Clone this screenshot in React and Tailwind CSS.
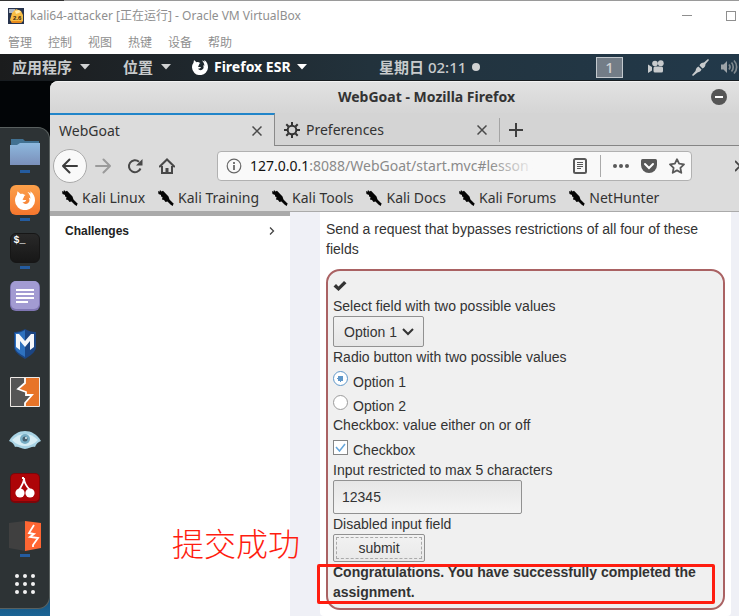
import React from "react";

const hostMenus = ["管理", "控制", "视图", "热键", "设备", "帮助"];
const bookmarks = ["Kali Linux", "Kali Training", "Kali Tools", "Kali Docs", "Kali Forums", "NetHunter"];

function VirtualBoxIcon() {
  return (
    <svg width="16" height="16" viewBox="0 0 16 16" className="shrink-0">
      <rect width="16" height="16" fill="#27334d" />
      <path d="M1 1h6v4H1z" fill="#aab4c4" />
      <path d="M4 5l4-4 5 2 2 4v6l-2 2H4l-2-3z" fill="#f8bd45" />
      <path d="M7 3l4-1 2 2-5 2z" fill="#ffe9a8" />
      <path d="M3 13h11l-1 2H4z" fill="#e88a1c" />
      <text x="5" y="12" fontSize="6" fontWeight="700" fill="#352411" fontFamily="Liberation Sans, sans-serif">2.6</text>
    </svg>
  );
}

function Caret({ color }) {
  return (
    <svg width="10" height="6" viewBox="0 0 10 6" className="shrink-0">
      <path d="M0 0h10L5 5.500z" fill={color} />
    </svg>
  );
}

function FirefoxMark({ size, color, hole }) {
  return (
    <svg width={size} height={size} viewBox="0 0 16 16" className="shrink-0">
      <path d="M2 1l2.500 2.200C6 2.800 7 2.800 7 3.500L8.500 4 7 6l-1 1.500c1 .8 2 .3 3 .5-.5 1.500-2 2-3 1.600 1 1.700 3 1.900 4.300 1C12 9.500 11.800 7.500 11 6.200c.6 0 1 .3 1.300.8C12.300 4.500 11.500 3 10 1.500c1.200.2 2 .8 2.500 1.500L12.300 1C15 3 16 5.500 16 8.300A8 7.700 0 0 1 0 8.500C0 6 .8 5 1.500 3.800z" fill={color} />
      <path d="M7.500 4.500l2-.5-1 2-1.500.3z" fill={hole} />
    </svg>
  );
}

function HostWindowBar() {
  return (
    <header className="bg-white font-['Noto_Sans','Noto_Sans_CJK_SC',sans-serif] text-xs text-[#8f8f8f]">
      <div className="h-px bg-[#9a9a9a]">
        <div className="h-px w-16 bg-[#333]" />
      </div>
      <div className="flex h-[29px] items-center pl-2">
        <VirtualBoxIcon />
        <h1 className="ml-1.5 whitespace-nowrap">kali64-attacker [正在运行] - Oracle VM VirtualBox</h1>
        <div className="ml-auto flex items-center gap-[34px] pr-[3px]">
          <button aria-label="Minimize" className="h-px w-2.5 bg-[#8f8f8f]" />
          <button aria-label="Maximize" className="size-2.5 border border-[#8f8f8f]" />
        </div>
      </div>
      <nav className="flex h-6 items-center gap-4 pt-0.5 pl-2">
        {hostMenus.map((m) => (
          <button key={m}>{m}</button>
        ))}
      </nav>
    </header>
  );
}

function GnomeBar() {
  return (
    <div className="flex h-[27px] items-center whitespace-nowrap border-b border-[#171c20] bg-linear-to-r from-[#1b1c1d] via-[#22323c] to-[#22394a] pl-3 font-['Noto_Sans','Noto_Sans_CJK_SC',sans-serif] text-[15px] font-bold text-[#c8cbcc]">
      <button className="flex w-[111px] items-center gap-2">应用程序<Caret color="#d0d2d3" /></button>
      <button className="flex w-[69px] items-center gap-2">位置<Caret color="#d0d2d3" /></button>
      <button className="flex w-[187px] items-center gap-1.5 text-sm text-white">
        <FirefoxMark size={16} color="#fff" hole="#20303a" />
        Firefox ESR
        <Caret color="#fff" />
      </button>
      <button className="flex items-center gap-1.5">
        <span>星期日 <span className="font-medium">02:11</span></span>
        <span className="size-2 rounded-full bg-[#d0d2d3]" />
      </button>
      <div className="ml-auto flex items-center pr-px">
        <button className="h-[21px] w-[27px] border border-[#c3c9ce] bg-[#737d87] leading-[18px] font-medium text-[#d0d2d3]">1</button>
        <svg width="16" height="14" viewBox="0 0 16 14" className="ml-[25px]" fill="#c8cbcd">
          <circle cx="7" cy="3.500" r="2.800" />
          <circle cx="12.800" cy="3.200" r="2.900" />
          <rect x="5.500" y="6.500" width="9.500" height="6" rx="1.500" />
          <path d="M0 4.500l4 2.500v3.500L0 13z" />
        </svg>
        <svg width="17" height="17" viewBox="0 0 17 17" className="ml-7" fill="#c8cbcd">
          <path d="M0 16l3.500-4C4 9 5.500 8 6.500 7.500l3 3C9 12 7.500 13 5.500 13.500L1 17z" />
          <path d="M7.500 6.500C8 4.500 10 3.500 12 3.500L16 0l1 1-3.500 4c0 2-1 4-3 4.500z" />
        </svg>
        <svg width="17" height="16" viewBox="0 0 17 16" className="ml-3" fill="none" stroke="#7f898f" strokeWidth="1.700">
          <path d="M0 5.500h2.500L6 2v12l-3.500-3.500H0z" fill="#9da4a9" stroke="none" />
          <path d="M8 5.500c1.300 1.500 1.300 3.500 0 5M10.500 3.500c2.300 2.500 2.300 6.500 0 9M13 1.500c3.500 3.500 3.500 9.500 0 13" />
        </svg>
      </div>
    </div>
  );
}

function FolderIcon() {
  return (
    <svg width="30" height="28" viewBox="0 0 30 28">
      <defs>
        <linearGradient id="folder" x1="0" y1="0" x2="0" y2="1">
          <stop offset="0" stopColor="#8db8de" />
          <stop offset="1" stopColor="#7b90ba" />
        </linearGradient>
      </defs>
      <path d="M1 1h12l2 2h14v6H1z" fill="#417192" />
      <path d="M0 7h7l3-2h20v22H0z" fill="url(#folder)" />
    </svg>
  );
}

function FirefoxApp() {
  return (
    <span className="flex size-[30px] items-center justify-center rounded-md bg-linear-to-b from-[#fba04a] to-[#f5762d]">
      <FirefoxMark size={20} color="#fff" hole="#f98c3b" />
    </span>
  );
}

function TerminalApp() {
  return (
    <span className="flex size-[30px] rounded-md border border-[#161616] bg-linear-to-b from-[#292929] to-[#171717] pl-[3px] font-['Liberation_Mono',monospace] text-[10px] leading-3.5 font-bold text-white">$_</span>
  );
}

function NotesIcon() {
  return (
    <svg width="30" height="30" viewBox="0 0 30 30">
      <rect width="30" height="30" rx="6" fill="#7f76b3" />
      <rect x="1" y="0" width="28" height="28" rx="5" fill="#a29bd2" />
      <path d="M6 9h18M6 13h18M6 17h18M6 21h12" stroke="#fff" strokeWidth="2" />
    </svg>
  );
}

function MetasploitIcon() {
  return (
    <svg width="24" height="30" viewBox="0 0 24 30">
      <path d="M1 3C5 3 9 2 12 0c3 2 7 3 11 3v15c0 5-6 9-11 12C7 27 1 23 1 18z" fill="#1b4583" />
      <path d="M2 4c4 0 7-1 10-3v27C7 25 2 22 2 18z" fill="#2d71bf" />
      <path d="M3 18V5h3l6 7 6-7h3v13l-4 3V12l-5 6-5-6v9z" fill="#f5f7fa" />
    </svg>
  );
}

function BurpOldIcon() {
  return (
    <svg width="30" height="30" viewBox="0 0 30 30">
      <rect width="30" height="30" rx="1" fill="#eeeae6" />
      <path d="M1 1h14v5l-7 6 8 3v3h6l-7 8v3H1z" fill="#555" />
      <path d="M15 1h14v28H15v-3l7-8h-6v-3l-8-3 7-6z" fill="#e77428" />
      <path d="M15 1v5l-7 6 8 3v3h6l-7 8v3" fill="none" stroke="#fff" strokeWidth="1.800" />
    </svg>
  );
}

function EyeIcon() {
  return (
    <svg width="32" height="18" viewBox="0 0 32 18">
      <path d="M0 10C4 3 10 0 16 0s12 3 16 10c-3 1-5 3-6 6-3-1-6 2-10 2s-7-3-10-2c-1-3-3-5-6-6z" fill="#a8d3e4" />
      <path d="M3 9c4-4 8-6 13-6s9 2 13 6c-4 4-8 6-13 6S7 13 3 9z" fill="#d7edf4" />
      <circle cx="16" cy="8" r="5" fill="#77adc4" />
      <circle cx="16" cy="8" r="2.500" fill="#46606f" />
      <circle cx="17" cy="7" r="1" fill="#e5f5fb" />
    </svg>
  );
}

function CherryIcon() {
  return (
    <svg width="30" height="30" viewBox="0 0 30 30">
      <rect width="30" height="30" rx="5" fill="#7c0509" />
      <rect x="1" y="1" width="28" height="27" rx="4" fill="#ad0508" />
      <path d="M14 5c0 5-2 7-5 12M14 5c0 5 2 8 6 12M12 5h2" fill="none" stroke="#fff" strokeWidth="1.800" />
      <circle cx="10" cy="20" r="4.600" fill="#fff" />
      <circle cx="20" cy="20" r="4.600" fill="#fff" />
    </svg>
  );
}

function BurpIcon() {
  return (
    <svg width="32" height="30" viewBox="0 0 32 30">
      <path d="M0 2l16-2v30L0 27z" fill="#404040" />
      <path d="M16 0l16 2v25l-16 3z" fill="#ff6633" />
      <path d="M25 4l-5 8 5 1-4 3 8 1-5 7v2" fill="none" stroke="#fff" strokeWidth="1.800" />
    </svg>
  );
}

function AppsGridIcon() {
  return (
    <svg width="20" height="20" viewBox="0 0 20 20" fill="#f2f2f2">
      {[2, 10, 18].map((y) => [2, 10, 18].map((x) => <circle key={x + "-" + y} cx={x} cy={y} r="2" />))}
    </svg>
  );
}

const dockItems = [
  { name: "Files", Icon: FolderIcon, running: true },
  { name: "Firefox", Icon: FirefoxApp, running: true },
  { name: "Terminal", Icon: TerminalApp, running: true },
  { name: "Notes", Icon: NotesIcon },
  { name: "Metasploit", Icon: MetasploitIcon },
  { name: "Burp Suite", Icon: BurpOldIcon },
  { name: "Iceweasel", Icon: EyeIcon },
  { name: "CherryTree", Icon: CherryIcon },
  { name: "Burp Suite Community", Icon: BurpIcon, running: true },
  { name: "Show applications", Icon: AppsGridIcon },
];

function Dock() {
  return (
    <aside className="flex w-[50px] shrink-0 flex-col bg-linear-to-b from-[#020507] from-80% to-[#1b6496] pt-[46px]">
      <div className="rounded-r-xl border-y border-r border-[#59605f] bg-[#2d3335]">
        {dockItems.map(({ name, Icon, running }) => (
          <button key={name} aria-label={name} className="relative flex h-12 w-full items-center justify-center">
            <Icon />
            {running && <span className="absolute bottom-[3px] h-[3px] w-2.5 bg-[#245ca0]" />}
          </button>
        ))}
      </div>
    </aside>
  );
}

function CloseX() {
  return (
    <svg width="10" height="10" viewBox="0 0 10 10" stroke="#4a4a4a" strokeWidth="1.500">
      <path d="M.5.5l9 9M9.500.5l-9 9" />
    </svg>
  );
}

function GearIcon() {
  return (
    <svg width="16" height="16" viewBox="0 0 16 16" fill="none" stroke="#333">
      <circle cx="8" cy="8" r="4.300" strokeWidth="2" />
      <path d="M8 0v3M8 13v3M0 8h3M13 8h3M2.300 2.300l2.200 2.200M11.500 11.500l2.200 2.200M2.300 13.700l2.200-2.200M11.500 4.500l2.200-2.200" strokeWidth="2" />
    </svg>
  );
}

function KaliIcon() {
  return (
    <svg width="16" height="16" viewBox="0 0 16 16" className="shrink-0">
      <path d="M0 1l1.500.7L2 0l1.500 1.500L5 .8l5.500 5.700 1 3L16 14l-1 .5V16l-2-1-3.500-3.500-2 .5L6 10 4 9.500 4.500 7 3 6.500V5L.5 4z" fill="#050505" />
    </svg>
  );
}

function Tabs() {
  return (
    <div className="flex h-[33px]">
      <div className="flex w-[225px] items-center justify-between border-t-2 border-r border-t-[#2185c9] border-r-[#8a8a8a] bg-[#dcdcdc] pr-3 pl-[9px]">
        <span>WebGoat</span>
        <button aria-label="Close WebGoat"><CloseX /></button>
      </div>
      <div className="flex flex-1 items-center border-b border-[#858585] pt-px">
        <div className="flex h-6 w-[225px] items-center border-r border-[#a4a4a4] pr-3 pl-[9px]">
          <GearIcon />
          <span className="ml-1.5">Preferences</span>
          <button aria-label="Close Preferences" className="ml-auto"><CloseX /></button>
        </div>
        <button aria-label="New tab" className="ml-[9px]">
          <svg width="14" height="14" viewBox="0 0 14 14" stroke="#3f3f3f" strokeWidth="2"><path d="M7 0v14M0 7h14" /></svg>
        </button>
      </div>
    </div>
  );
}

function Toolbar() {
  return (
    <div className="flex h-10 items-center bg-[#dcdcdc] pl-[3px] text-[#484848]">
      <button aria-label="Back" className="flex size-[34px] shrink-0 items-center justify-center rounded-full border border-[#aaa] bg-[#f9f9f9]">
        <svg width="16" height="16" viewBox="0 0 16 16" fill="none" stroke="#3c3c3c" strokeWidth="2" strokeLinecap="round" strokeLinejoin="round"><path d="M15 8H1M7.500 1.500L1 8l6.500 6.500" /></svg>
      </button>
      <button aria-label="Forward" className="ml-2">
        <svg width="16" height="16" viewBox="0 0 16 16" fill="none" stroke="#9a9a9a" strokeWidth="2" strokeLinecap="round" strokeLinejoin="round"><path d="M1 8h14M8.500 1.500L15 8l-6.500 6.500" /></svg>
      </button>
      <button aria-label="Reload" className="ml-4">
        <svg width="16" height="16" viewBox="0 0 16 16" fill="none" stroke="#484848" strokeWidth="2"><path d="M13.500 10.500A6 6 0 1 1 12 3.800" /><path d="M15.500 1v6.500H9z" fill="#484848" stroke="none" /></svg>
      </button>
      <button aria-label="Home" className="ml-4">
        <svg width="16" height="16" viewBox="0 0 16 16" fill="none" stroke="#484848" strokeWidth="2"><path d="M.8 8.500L8 1.500l7.200 7" strokeLinecap="round" /><path d="M3 8v7h10V8" /><path d="M8 10v5" strokeWidth="3" /></svg>
      </button>
      <div className="ml-[42px] flex h-[30px] min-w-0 flex-1 items-center rounded border border-[#b1b1b1] bg-[#f9f9f9] pr-1.5 pl-2">
        <svg width="16" height="16" viewBox="0 0 16 16" fill="none" stroke="#686868" className="shrink-0"><circle cx="8" cy="8" r="6.800" strokeWidth="1.200" /><path d="M8 7v5M8 4v2" strokeWidth="1.800" /></svg>
        <div className="relative ml-2 min-w-0 flex-1 overflow-hidden whitespace-nowrap text-[#8a8a8a]">
          <span className="text-[#111]">127.0.0.1</span>:8088/WebGoat/start.mvc#lesson
          <span className="absolute inset-y-0 right-0 w-12 bg-linear-to-r from-transparent to-[#f9f9f9]" />
        </div>
        <button aria-label="Reader view" className="ml-9">
          <svg width="14" height="16" viewBox="0 0 14 16" fill="none" stroke="#595959"><rect x="1" y="1" width="12" height="14" rx="1.500" strokeWidth="2" /><path d="M4 4.500h6M4 6.500h6M4 8.500h6M4 10.500h4" /></svg>
        </button>
        <span className="ml-[13px] h-[22px] w-px bg-[#aaa]" />
        <button aria-label="Page actions" className="ml-3">
          <svg width="16" height="4" viewBox="0 0 16 4" fill="#595959"><circle cx="2" cy="2" r="2" /><circle cx="8" cy="2" r="2" /><circle cx="14" cy="2" r="2" /></svg>
        </button>
        <button aria-label="Pocket" className="ml-3">
          <svg width="16" height="15" viewBox="0 0 16 15"><path d="M1.500 0h13Q16 0 16 1.500V6A8 8 0 0 1 0 6V1.500Q0 0 1.500 0z" fill="#595959" /><path d="M4 5l4 4 4-4" fill="none" stroke="#fff" strokeWidth="2" strokeLinecap="round" /></svg>
        </button>
        <button aria-label="Bookmark" className="ml-3">
          <svg width="16" height="16" viewBox="0 0 16 16" fill="none" stroke="#595959" strokeWidth="1.800" strokeLinejoin="round"><path d="M8 1.200l2.100 4.500 4.900.7-3.600 3.400.9 5L8 12.400l-4.300 2.400.9-5L1 6.400l4.900-.7z" /></svg>
        </button>
      </div>
      <button aria-label="More tools" className="ml-[43px] w-1 overflow-hidden">
        <svg width="12" height="12" viewBox="0 0 12 12" fill="none" stroke="#444" strokeWidth="1.800"><path d="M0 1l5 5-5 5M6 1l5 5-5 5" /></svg>
      </button>
    </div>
  );
}

function Bookmarks() {
  return (
    <nav className="flex h-[26px] items-center gap-[13px] overflow-hidden border-b border-[#aaa] bg-[#dcdcdc] pb-0.5 pl-3">
      {bookmarks.map((b) => (
        <a key={b} href="#" className="flex items-center gap-1 whitespace-nowrap"><KaliIcon />{b}</a>
      ))}
    </nav>
  );
}

const radioClass =
  "mt-1 size-[15px] shrink-0 appearance-none rounded-full border border-[#9b9b9b] bg-white checked:border-[#5f97c9] checked:bg-[radial-gradient(circle,#5f97c9_0_3px,#fff_3px)]";

function AssignmentForm() {
  return (
    <form onSubmit={(e) => e.preventDefault()} className="flex flex-col items-start rounded-[14px] border-2 border-[#aa6263] bg-[#f0f0f0] px-[5px] pt-[5px] pb-1.5">
      <div className="flex h-5 items-center">
        <svg width="14" height="12" viewBox="0 0 14 12"><path d="M.5 6.500L3 4l2.500 2.500L11 1l2.500 2.300L5.500 11z" fill="#333" /></svg>
      </div>
      <label htmlFor="choice">Select field with two possible values</label>
      <div className="relative">
        <select id="choice" className="block h-[31px] w-[91px] appearance-none rounded-xs border border-[#919191] bg-linear-to-b from-[#f2f2f2] to-[#e6e6e6] pl-2.5">
          <option>Option 1</option>
          <option>Option 2</option>
        </select>
        <svg width="12" height="8" viewBox="0 0 12 8" className="pointer-events-none absolute top-3 right-2.5"><path d="M1 1l5 5 5-5" fill="none" stroke="#333" strokeWidth="2" /></svg>
      </div>
      <fieldset>
        <legend>Radio button with two possible values</legend>
        <label className="flex h-6 items-start gap-[5px]">
          <input type="radio" name="mode" defaultChecked className={radioClass} />
          <span className="pt-[5px]">Option 1</span>
        </label>
        <label className="flex h-6 items-start gap-[5px]">
          <input type="radio" name="mode" className={radioClass} />
          <span className="pt-[5px]">Option 2</span>
        </label>
      </fieldset>
      <p>Checkbox: value either on or off</p>
      <label className="relative flex h-[25px] items-start gap-[5px]">
        <input type="checkbox" defaultChecked className="peer mt-[5px] size-[15px] appearance-none border border-[#858585] bg-white" />
        <svg width="11" height="9" viewBox="0 0 11 9" className="absolute top-2 left-0.5 hidden peer-checked:block"><path d="M1 4l3.500 4L10 1" fill="none" stroke="#65a5da" strokeWidth="1.500" /></svg>
        <span className="pt-[5px]">Checkbox</span>
      </label>
      <label htmlFor="short">Input restricted to max 5 characters</label>
      <input id="short" type="text" maxLength={5} defaultValue="12345" className="h-[34px] w-[189px] rounded-xs border border-[#919191] bg-linear-to-b from-[#e6e6e6] to-[#f4f4f4] px-2" />
      <p>Disabled input field</p>
      <button type="submit" className="h-7 w-[92px] rounded-xs border border-[#919191] bg-linear-to-b from-[#f2f2f2] to-[#e9e9e9] p-0.5">
        <span className="block border border-dashed border-[#aaa]">submit</span>
      </button>
      <div className="relative self-stretch font-bold">
        <p>Congratulations. You have successfully completed the assignment.</p>
        <div className="absolute top-0.5 right-[3px] -bottom-0.5 -left-4 rounded-xs border-3 border-[#ff1d10]" />
      </div>
    </form>
  );
}

function Page() {
  return (
    <main className="relative flex flex-1 bg-[#eff0f6] font-['Liberation_Sans',sans-serif] text-sm leading-5 text-[#333]">
      <nav className="w-60 shrink-0 border-t-4 border-[#aaa] bg-white">
        <a href="#" className="flex h-[30px] items-center justify-between px-[15px] text-xs font-bold text-[#222]">
          Challenges
          <svg width="6" height="8" viewBox="0 0 6 8" fill="none" stroke="#444" strokeWidth="1.300"><path d="M1 .5L4.500 4 1 7.500" /></svg>
        </a>
      </nav>
      <section className="mr-2 ml-[30px] flex-1 rounded-b bg-white px-1.5 pt-[7px] pb-1.5">
        <p className="mb-2.5">Send a request that bypasses restrictions of all four of these fields</p>
        <AssignmentForm />
      </section>
      <p className="absolute bottom-[50px] left-[122px] font-['Noto_Sans_CJK_SC',sans-serif] text-[32px] leading-12 font-light text-[#ff1d10]">提交成功</p>
    </main>
  );
}

export default function App() {
  return (
    <div className="flex min-h-screen flex-col overflow-hidden">
      <HostWindowBar />
      <GnomeBar />
      <div className="flex flex-1 bg-[#020507]">
        <Dock />
        <div className="flex min-w-0 flex-1 flex-col rounded-tl-lg bg-[#d4d4d4] font-['Noto_Sans',sans-serif] text-sm text-[#333]">
          <div className="flex h-8 items-center justify-between rounded-tl-lg border-t border-[#f2f2f2] bg-linear-to-b from-[#e2e2e2] to-[#d5d5d5] pr-3 pb-0.5 pl-72">
            <h2 className="text-sm font-bold whitespace-nowrap">WebGoat - Mozilla Firefox</h2>
            <button aria-label="Minimize window" className="flex size-4 items-center justify-center rounded-full bg-[#555]">
              <span className="h-0.5 w-2 bg-white" />
            </button>
          </div>
          <Tabs />
          <Toolbar />
          <Bookmarks />
          <Page />
        </div>
      </div>
    </div>
  );
}
